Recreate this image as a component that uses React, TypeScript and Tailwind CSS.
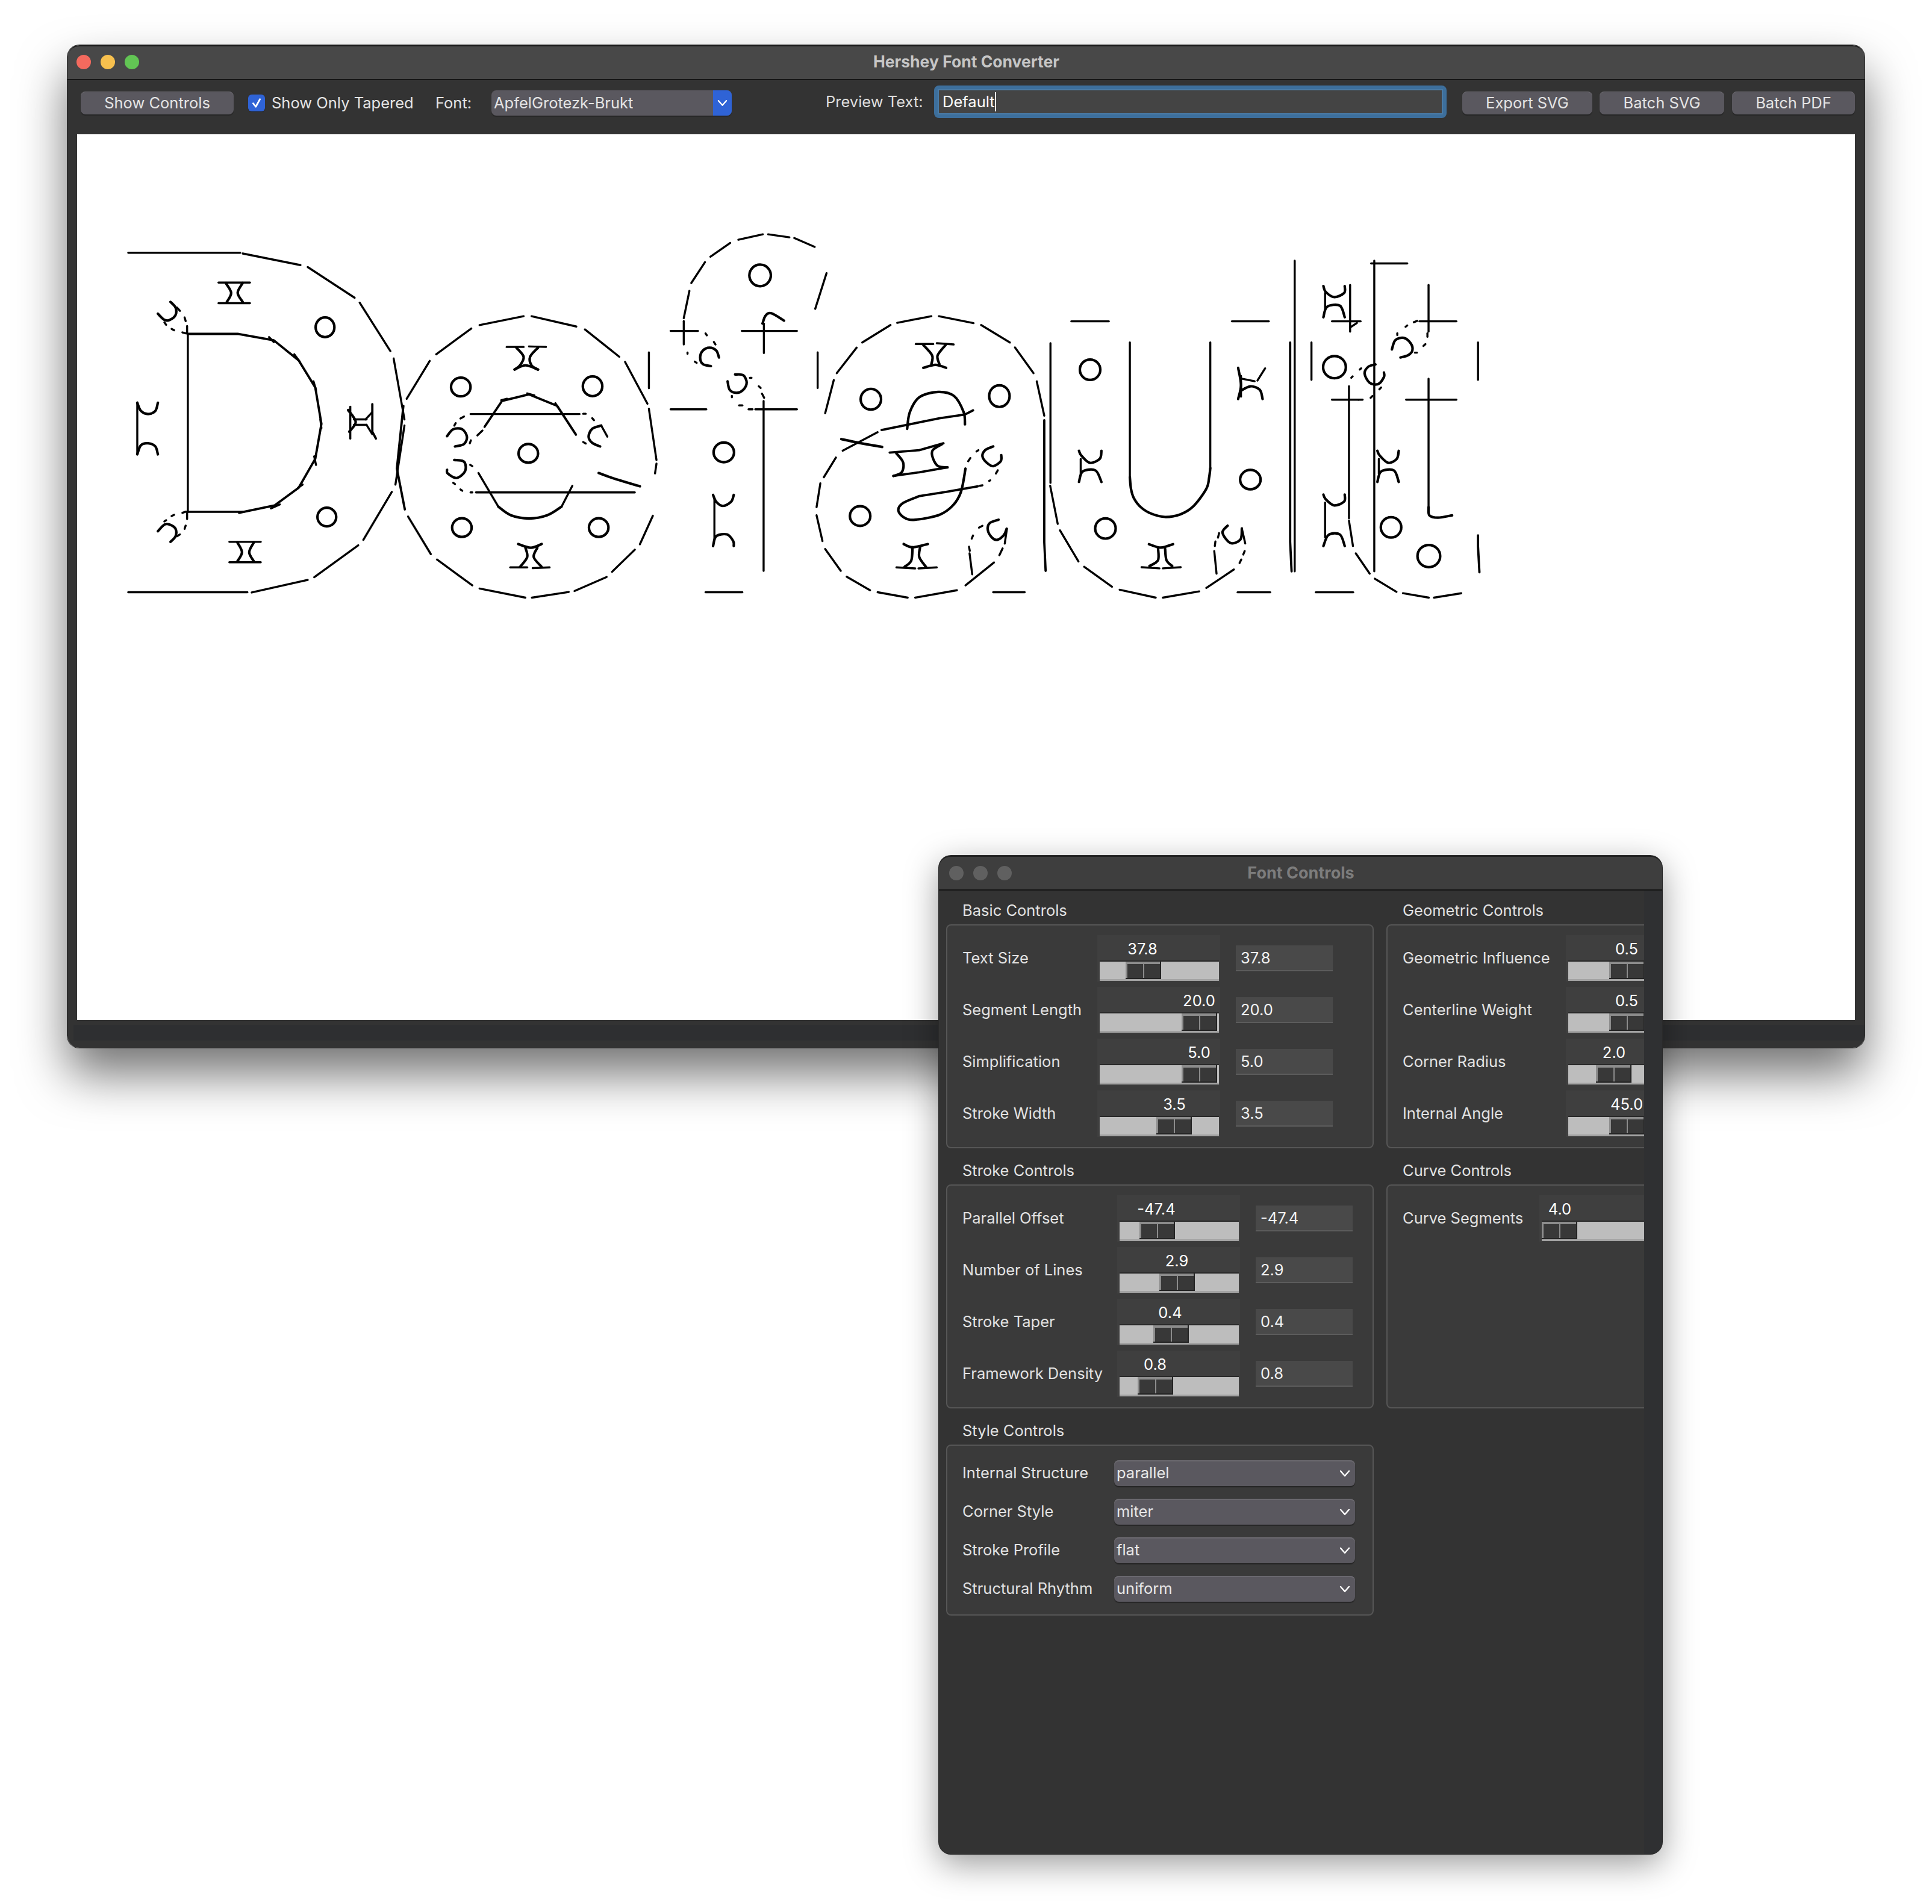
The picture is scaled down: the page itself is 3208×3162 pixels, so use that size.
import React from "react";

type Pt = string;
type Ell = [number, number, number, number];

const A_LINES: Pt[] = [
  "55,122 365,122","372,125 532,172","552,180 682,305","696,325 781,522","790,552 820,800","820,825 795,1065","785,1095 706,1290","692,1312 570,1442","552,1453 397,1504","385,1503 55,1503",
  "220,452 360,452 458,478 527,560 573,670 590,818 573,960 527,1078 460,1150 362,1180","220,1176 375,1176","220,452 220,1176","218,1180 218,1205",
  "445,465 458,485","515,535 530,565","568,645 575,680","587,800 590,835","570,950 575,985","525,1078 538,1065","450,1162 475,1146",
  "218,420 218,450","205,446 215,450","175,432 182,437","155,405 160,415","190,345 198,358","211,385 214,400","172,322 186,345 186,375 170,395 155,395 137,370",
  "172,1298 186,1275 186,1245 170,1228 155,1228 137,1255","205,1180 215,1175","175,1193 182,1188","155,1215 160,1210","190,1275 198,1268","211,1245 214,1232",
  "80,732 80,942","80,732 90,765 110,778 130,765 137,732","80,942 90,905 110,897 130,910 137,942",
  "305,243 392,243","305,327 392,327","325,245 340,285 328,322","372,245 358,285 372,322",
  "335,1298 422,1298","335,1381 422,1381","357,1300 370,1340 357,1378","403,1300 390,1340 403,1378",
  "670,748 670,878","731,738 731,850 741,878","680,800 715,800","680,822 715,822","664,762 685,810 667,850","731,770 712,800","731,860 715,822",
  "826,716 890,562","908,535 1005,430","1028,416 1150,380","1172,380 1296,422","1320,434 1415,545","1431,566 1493,736","1497,757 1518,965","1518,980 1514,1020",
  "817,745 799,1000 821,1166","830,1195 893,1348","910,1370 1008,1475","1028,1488 1155,1525","1173,1525 1275,1502","1291,1498 1380,1441","1395,1420 1458,1330","1472,1308 1508,1192",
  "1497,527 1497,673","1022,865 1036,845","1042,830 1090,725 1165,698 1243,745 1295,862","1088,722 1104,716","1160,694 1180,702","1238,734 1246,752","1003,778 1305,778","1315,777 1322,777","985,788 975,796","962,815 958,825",
  "938,868 955,840 980,840 993,870 985,900 960,910","1004,885 1001,897","1365,825 1340,838 1330,870 1340,895 1362,910","1365,825 1382,870","1340,795 1345,803","1315,892 1322,898",
  "958,965 985,972 988,1010 965,1038 940,1020 938,1005","1002,985 1008,990","955,1058 960,1063","975,1085 980,1090","1003,1097 1008,1097","1018,1097 1458,1097",
  "1025,1018 1080,1155","1080,1155 1115,1190 1165,1203 1215,1190 1255,1155","1255,1155 1285,1070","1358,1018 1410,1045 1472,1072",
  "1103,505 1150,505","1165,503 1212,505","1130,508 1150,545 1140,580 1125,597","1190,508 1168,545 1172,580 1190,597","1125,597 1155,580 1190,597",
  "1135,1307 1170,1322 1200,1307","1155,1322 1160,1360 1140,1400","1188,1322 1178,1360 1200,1400","1113,1402 1160,1402","1175,1405 1222,1402",
];
const A_RINGS: Ell[] = [[600,425,26,40],[605,1197,26,38],[976,668,27,38],[1341,665,27,40],[1163,938,27,38],[979,1240,27,38],[1358,1240,27,38]];

const B_LINES: Pt[] = [
  "611,98 535,62","517,59 438,47","418,47 327,69","297,82 223,138","203,160 152,245","145,277 124,388","124,400 124,495","75,440 160,440","162,440 177,440","340,440 545,440","422,410 422,530",
  "417,410 428,378 450,368 497,398","655,205 613,350","622,527 622,672","75,759 208,759","390,759 545,759","421,725 421,1416",
  "205,450 210,458","236,485 242,495","138,528 138,533","165,565 172,570","255,548 245,520 220,508 195,520 185,548 195,575 225,583",
  "315,617 345,620 358,650 345,680 320,692 295,680 287,645","370,631 376,631","403,665 410,672","415,695 423,712","303,704 303,710","330,743 342,743","365,759 380,759",
  "238,1120 238,1290","233,1107 245,1135 270,1152 300,1135 310,1107","233,1315 245,1275 285,1268 308,1295 310,1315","205,1503 342,1503",
  "650,775 682,640","693,612 767,508","788,487 893,416","918,407 1045,380","1073,380 1202,408","1230,416 1337,487","1356,507 1425,612","1437,645 1465,785","1465,803 1465,1300 1470,1416","1488,490 1488,1058","1487,1070 1515,1225",
  "715,927 845,852","690,955 645,1035","632,1060 618,1157","618,1190 640,1295","650,1327 708,1416","730,1440 817,1495","845,1503 957,1525","985,1525 1140,1495","1172,1475 1278,1382","1298,1352 1310,1325","1318,1305 1326,1245",
  "710,880 775,895 862,912","860,843 1000,812 1075,795 1170,780 1200,763","955,838 965,770 1000,710 1070,688 1130,705 1165,770 1170,820",
  "890,935 1000,925 1090,897","903,1030 1000,1015 1105,995","915,938 940,975 935,1015 905,1030","1085,900 1050,925 1050,955 1070,990 1105,995",
  "1218,1072 1100,1095 1000,1112","1000,1112 940,1140 922,1170 945,1200 985,1208 1075,1188 1125,1150 1155,1095 1172,1000","1225,1070 1235,1068","1260,1050 1264,1048","1285,1020 1292,1007","1182,970 1190,957","1213,930 1220,925",
  "1275,910 1245,925 1235,950 1250,975 1275,990 1303,970 1305,945",
  "987,493 1052,493","1065,490 1128,495","1015,497 1048,540 1045,575","1098,497 1068,540 1075,575","1015,590 1060,578 1100,590",
  "942,1307 975,1320 1032,1307","975,1320 970,1375 945,1400","1003,1320 1000,1360 1025,1400","915,1402 985,1406","997,1406 1065,1402",
  "1185,1318 1188,1335","1195,1285 1200,1272","1222,1240 1235,1233","1187,1345 1197,1430","1295,1208 1262,1222 1255,1250 1270,1280 1290,1290 1315,1270 1325,1245","1275,1503 1392,1503",
];
const B_RINGS: Ell[] = [[408,214,40,44],[273,934,38,40],[820,718,38,42],[1298,705,38,44],[780,1193,38,40]];

const C_LINES: Pt[] = [
  "40,323 172,323","605,323 735,323","246,415 246,1000","529,415 529,960",
  "246,1000 250,1050 260,1090 285,1130 322,1158 370,1172 425,1160 470,1125 515,1050 525,1000 529,960",
  "627,525 637,600 627,660","637,560 637,650","640,572 685,583","695,580 722,527","635,625 670,605 703,620 713,660",
  "73,920 73,985","67,885 75,905 105,937 140,920 146,885","67,1020 80,975 125,970 146,1020",
  "65,1365 0,1230","85,1388 183,1475","210,1488 337,1522","362,1522 490,1495","515,1480 612,1400","632,1372 638,1357","645,1335 650,1320","652,1287 640,1222",
  "313,1290 355,1305 398,1290","345,1305 345,1360 315,1385","370,1310 375,1360 395,1385","287,1390 350,1395","362,1395 425,1390",
  "590,1210 572,1240 600,1285 635,1270 640,1222","560,1242 556,1262","547,1278 545,1298","543,1320 551,1418","625,1499 740,1499",
  "810,415 810,1280 815,1408","826,60 826,1408","885,415 885,577",
  "933,200 933,270","927,170 935,195 965,218 1000,200 1002,170","927,305 940,260 985,255 1002,305","1021,165 1021,368","957,323 1058,323","1021,350 1045,330",
  "1025,568 1030,562","1055,532 1060,527","1110,510 1085,520 1072,550 1090,590 1120,595 1140,565 1140,545","1124,618 1130,610","1093,655 1100,647","1050,663 1065,663",
  "1106,60 1106,1408","1095,72 1222,72","1297,165 1297,368","1265,323 1395,323","1245,327 1257,321","1216,347 1222,341","1187,375 1187,383","1293,375 1293,390","1279,430 1286,422","1249,459 1256,459",
  "1168,445 1180,405 1210,395 1235,420 1240,450 1225,470 1198,480","1471,415 1471,577","1297,572 1297,1130","1218,663 1395,663","1297,1130 1300,1165 1330,1175 1380,1165",
  "957,663 1050,663","1017,605 1017,1178","1017,1188 1031,1298","933,1110 933,1260","927,1075 935,1095 965,1122 1000,1105 1002,1075","927,1298 945,1250 985,1248 1002,1298",
  "1122,920 1122,985","1117,885 1125,905 1155,937 1185,920 1192,885","1117,1020 1130,975 1175,970 1192,1020",
  "1041,1330 1090,1418","1108,1440 1184,1497","1207,1503 1298,1522","1316,1522 1412,1503","900,1499 1032,1499","1471,1252 1471,1300 1476,1412",
];
const C_RINGS: Ell[] = [[106,533,36,44],[670,1010,36,42],[160,1222,36,44],[966,522,40,48],[1165,1217,36,44],[1298,1342,40,48]];

function toPath(pts: number[][]) {
  let d = `M${pts[0][0]} ${pts[0][1]}`;
  for (let i = 0; i < pts.length - 1; i++) {
    const p0 = pts[Math.max(0, i - 1)];
    const p1 = pts[i];
    const p2 = pts[i + 1];
    const p3 = pts[Math.min(pts.length - 1, i + 2)];
    d += ` C${p1[0] + (p2[0] - p0[0]) / 6} ${p1[1] + (p2[1] - p0[1]) / 6} ${p2[0] - (p3[0] - p1[0]) / 6} ${p2[1] - (p3[1] - p1[1]) / 6} ${p2[0]} ${p2[1]}`;
  }
  return d;
}

function Stroke({ points }: { points: Pt }) {
  const pts = points.split(" ").map((p) => p.split(",").map(Number));
  const curved =
    pts.length > 2 && pts.every((p, i) => i === 0 || Math.hypot(p[0] - pts[i - 1][0], p[1] - pts[i - 1][1]) <= 100);
  if (curved) {
    return <path d={toPath(pts)} strokeWidth={4.2} vectorEffect="non-scaling-stroke" />;
  }
  return <polyline points={points} strokeWidth={pts.length > 2 ? 3.8 : 3.4} vectorEffect="non-scaling-stroke" />;
}

function Strokes({ lines, rings, transform }: { lines: Pt[]; rings: Ell[]; transform: string }) {
  return (
    <g transform={transform} fill="none" stroke="#000" strokeLinecap="round" strokeLinejoin="round">
      {lines.map((p, i) => (
        <Stroke key={i} points={p} />
      ))}
      {rings.map(([cx, cy, rx, ry], i) => (
        <ellipse key={i} cx={cx} cy={cy} rx={rx} ry={ry} vectorEffect="non-scaling-stroke" strokeWidth={4.2} />
      ))}
    </g>
  );
}

function Chevron({ className }: { className: string }) {
  return (
    <svg viewBox="0 0 18 12" className={className} fill="none" stroke="currentColor" strokeWidth={2.4} strokeLinecap="round" strokeLinejoin="round">
      <path d="M2 2 L9 10 L16 2" />
    </svg>
  );
}

function ToolButton({ label, className }: { label: string; className: string }) {
  return (
    <button className={`h-[38px] rounded-[8px] bg-[#5a585f] text-[#e4e4e4] text-[25.5px] leading-[38px] text-center shadow-[inset_0_1px_0_#6b696f,0_2px_1px_#262626] ${className}`}>
      {label}
    </button>
  );
}

type SliderProps = { value: string; offset: number; center: number };

function Slider({ value, offset, center }: SliderProps) {
  return (
    <div className="relative w-[204px] h-[77px] shrink-0 bg-[#3f3f3f] pt-[42px] pl-[4px] pr-[2px]">
      <span
        className="absolute top-[4px] h-[38px] -translate-x-1/2 text-[25.5px] leading-[38px] text-white whitespace-nowrap"
        style={{ left: center }}
      >
        {value}
      </span>
      <div className="flex h-[34px] border-t-2 border-b-[3px] border-t-[#292929] border-b-[#a3a3a3] bg-[#bdbdbd]">
        <div className="shrink-0" style={{ width: offset }} />
        <div className="flex gap-[2px] w-[59px] h-[29px] shrink-0 bg-[#8c8c8c] pl-[3px] pt-[4px] border-r-2 border-b-2 border-[#232323]">
          <div className="flex-1 bg-[#383838]" />
          <div className="flex-1 bg-[#383838]" />
        </div>
      </div>
    </div>
  );
}

function SliderRow({ label, labelClass, withInput, ...s }: SliderProps & { label: string; labelClass: string; withInput: boolean }) {
  return (
    <div className="flex items-center h-[77px]">
      <span className={`shrink-0 text-[25.5px] text-[#e2e2e2] whitespace-nowrap ${labelClass}`}>{label}</span>
      <Slider {...s} />
      {withInput && (
        <div className="ml-[26px] w-[161px] h-[43px] shrink-0 bg-[#494949] border-b-2 border-[#5c5c5c] pl-[8px] text-[25.5px] leading-[41px] text-[#f2f2f2]">
          {s.value}
        </div>
      )}
    </div>
  );
}

function Section({ title, className, children }: { title: string; className: string; children: React.ReactNode }) {
  return (
    <section className="min-w-0">
      <h2 className="h-[32px] pl-[27px] text-[25.5px] leading-[32px] font-normal text-[#e2e2e2] whitespace-nowrap">{title}</h2>
      <div className={`mt-[7px] bg-[#3a3a3a] border-2 border-[#565656] rounded-[8px] pl-[25px] ${className}`}>{children}</div>
    </section>
  );
}

const BASIC = [
  { label: "Text Size", value: "37.8", offset: 43, center: 75 },
  { label: "Segment Length", value: "20.0", offset: 136, center: 169 },
  { label: "Simplification", value: "5.0", offset: 136, center: 169 },
  { label: "Stroke Width", value: "3.5", offset: 94, center: 128 },
];
const GEO = [
  { label: "Geometric Influence", value: "0.5", offset: 68, center: 101 },
  { label: "Centerline Weight", value: "0.5", offset: 68, center: 101 },
  { label: "Corner Radius", value: "2.0", offset: 46, center: 80 },
  { label: "Internal Angle", value: "45.0", offset: 68, center: 101 },
];
const STROKE = [
  { label: "Parallel Offset", value: "-47.4", offset: 33, center: 65 },
  { label: "Number of Lines", value: "2.9", offset: 66, center: 99 },
  { label: "Stroke Taper", value: "0.4", offset: 56, center: 88 },
  { label: "Framework Density", value: "0.8", offset: 30, center: 63 },
];
const STYLE = [
  { label: "Internal Structure", value: "parallel" },
  { label: "Corner Style", value: "miter" },
  { label: "Stroke Profile", value: "flat" },
  { label: "Structural Rhythm", value: "uniform" },
];

function MainWindow() {
  return (
    <div className="absolute left-[112px] top-[75px] w-[2984px] h-[1665px] flex flex-col rounded-[20px] overflow-hidden bg-[#333333] border-t-2 border-t-[#1a1a1a]">
      <header className="relative h-[56px] shrink-0 flex items-center pb-[2px] bg-[#484848] border-b-2 border-[#161616]">
        <div className="flex gap-[16px] pl-[15px]">
          <span className="w-[24px] h-[24px] rounded-full bg-[#f46a5e]" />
          <span className="w-[24px] h-[24px] rounded-full bg-[#f7c04e]" />
          <span className="w-[24px] h-[24px] rounded-full bg-[#62c554]" />
        </div>
        <h1 className="flex-1 pr-[118px] text-center text-[26.5px] font-bold text-[#c6c6c6] whitespace-nowrap">Hershey Font Converter</h1>
      </header>
      <div className="h-[90px] shrink-0 flex items-center pl-[22px] pb-[14px] text-[25.5px] text-[#e4e4e4] whitespace-nowrap">
        <ToolButton label="Show Controls" className="w-[254px] shrink-0" />
        <span className="ml-[24px] w-[28px] h-[28px] shrink-0 rounded-[6px] bg-[#2f63d6] flex items-center justify-center shadow-[0_1px_1px_#222]">
          <svg viewBox="0 0 16 16" className="w-[20px] h-[20px]" fill="none" stroke="#fff" strokeWidth={2.2} strokeLinecap="round" strokeLinejoin="round">
            <path d="M3.5 8.5 L7 13 L12.5 3" />
          </svg>
        </span>
        <span className="ml-[11px] w-[234px] shrink-0">Show Only Tapered</span>
        <span className="ml-[38px] w-[60px] shrink-0">Font:</span>
        <div className="ml-[33px] w-[399px] h-[42px] shrink-0 flex rounded-[8px] overflow-hidden bg-[#5a585f] shadow-[0_2px_1px_#262626]">
          <span className="flex-1 pl-[4px] leading-[42px]">ApfelGrotezk-Brukt</span>
          <span className="w-[31px] bg-[#2f63d6] flex items-center justify-center text-white">
            <Chevron className="w-[17px] h-[12px]" />
          </span>
        </div>
        <span className="ml-[156px] w-[162px] shrink-0 mb-[4px] text-[#dedede]">Preview Text:</span>
        <div className="ml-[18px] w-[851px] h-[54px] shrink-0 mb-[4px] rounded-[8px] bg-[#3d6f9c] p-[6px]">
          <div className="h-full border-2 border-[#4a7ba6] bg-[#444444] pl-[6px] flex items-center text-white">
            <span>Default</span>
            <span className="w-[2px] h-[32px] bg-white" />
          </div>
        </div>
        <ToolButton label="Export SVG" className="ml-[26px] w-[216px] shrink-0" />
        <ToolButton label="Batch SVG" className="ml-[12px] w-[207px] shrink-0" />
        <ToolButton label="Batch PDF" className="ml-[13px] w-[204px] shrink-0" />
      </div>
      <div className="mx-[16px] h-[1471px] shrink-0 bg-white">
        <svg viewBox="128 223 2952 1471" className="block w-[2952px] h-[1471px]">
          <Strokes lines={A_LINES} rings={A_RINGS} transform="translate(180 370) scale(0.5995 0.4082)" />
          <Strokes lines={B_LINES} rings={B_RINGS} transform="translate(1080 370) scale(0.4464 0.4082)" />
          <Strokes lines={C_LINES} rings={C_RINGS} transform="translate(1760 410) scale(0.4719 0.3827)" />
        </svg>
      </div>
      <div className="flex-1 pt-[8px] pl-[10px]">
        <div className="h-[26px] bg-[#2e2f31]" />
      </div>
    </div>
  );
}

function FontControls() {
  return (
    <div className="absolute left-[1559px] top-[1421px] w-[1201px] h-[1658px] flex flex-col rounded-[20px] overflow-hidden bg-[#333333] border-t-2 border-t-[#1f1f1f] shadow-[0_0_0_1px_#2a2a2a,0_16px_56px_rgba(0,0,0,0.4)]">
      <header className="relative h-[56px] shrink-0 flex items-center bg-[#3e3e3e] border-b-2 border-[#161616]">
        <div className="flex gap-[16px] pl-[17px]">
          <span className="w-[24px] h-[24px] rounded-full bg-[#606060]" />
          <span className="w-[24px] h-[24px] rounded-full bg-[#606060]" />
          <span className="w-[24px] h-[24px] rounded-full bg-[#606060]" />
        </div>
        <h1 className="flex-1 pr-[120px] text-center text-[27px] font-bold text-[#7d7d7d] whitespace-nowrap">Font Controls</h1>
      </header>
      <div className="flex-1 flex min-h-0">
        <div className="w-[1171px] shrink-0 overflow-hidden pl-[12px] pt-[17px]">
          <div className="grid grid-cols-[710px_700px] gap-x-[21px] gap-y-[21px] w-[1431px]">
            <Section title="Basic Controls" className="h-[372px] pt-[16px] flex flex-col gap-[9px]">
              {BASIC.map((s) => (
                <SliderRow key={s.label} {...s} labelClass="w-[224px]" withInput />
              ))}
            </Section>
            <Section title="Geometric Controls" className="h-[372px] pt-[16px] flex flex-col gap-[9px]">
              {GEO.map((s) => (
                <SliderRow key={s.label} {...s} labelClass="w-[271px]" withInput={false} />
              ))}
            </Section>
            <Section title="Stroke Controls" className="h-[372px] pt-[16px] flex flex-col gap-[9px]">
              {STROKE.map((s) => (
                <SliderRow key={s.label} {...s} labelClass="w-[257px]" withInput />
              ))}
            </Section>
            <Section title="Curve Controls" className="h-[372px] pt-[16px]">
              <SliderRow label="Curve Segments" value="4.0" offset={0} center={34} labelClass="w-[227px]" withInput={false} />
            </Section>
            <Section title="Style Controls" className="h-[284px] pt-[24px] flex flex-col gap-[21px]">
              {STYLE.map((s) => (
                <div key={s.label} className="flex items-center h-[43px]">
                  <span className="w-[252px] shrink-0 text-[25.5px] text-[#e2e2e2] whitespace-nowrap">{s.label}</span>
                  <div className="w-[400px] h-[43px] shrink-0 flex items-center justify-between pl-[4px] pr-[8px] rounded-[8px] bg-[#5a585f] text-[25.5px] text-[#e8e8e8] shadow-[inset_0_2px_0_#6b696f,0_2px_1px_#262626]">
                    <span>{s.value}</span>
                    <Chevron className="w-[18px] h-[12px] text-white" />
                  </div>
                </div>
              ))}
            </Section>
          </div>
        </div>
        <div className="flex-1 bg-[#2f3032]" />
      </div>
    </div>
  );
}

export default function App() {
  return (
    <div className="relative w-[3208px] h-[3162px] overflow-hidden bg-white [font-family:Inter,sans-serif]">
      <div className="absolute left-[112px] top-[75px] w-[2984px] h-[1665px] rounded-[20px] shadow-[0_0_0_1px_#222,0_44px_80px_rgba(0,0,0,0.55)]" />
      <MainWindow />
      <FontControls />
    </div>
  );
}
